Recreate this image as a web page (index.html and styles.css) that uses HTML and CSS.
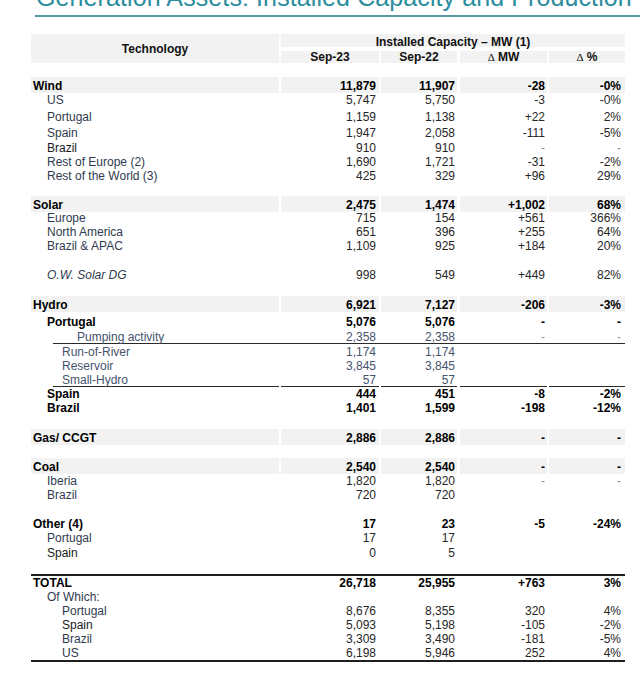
FILE: index.html
```html
<!DOCTYPE html>
<html lang="en">
<head>
<meta charset="utf-8">
<title>Generation Assets: Installed Capacity and Production</title>
<link rel="stylesheet" href="styles.css">
</head>
<body>
<h1 class="title">Generation Assets: Installed Capacity and Production</h1>
<div class="table">
  <div class="head">
    <div class="h-tech">Technology</div>
    <div class="h-cap">Installed Capacity – MW (1)</div>
    <div class="h-col">Sep-23</div>
    <div class="h-col">Sep-22</div>
    <div class="h-col"><span class="delta">Δ</span> MW</div>
    <div class="h-col"><span class="delta">Δ</span> %</div>
  </div>

  <div class="row band section"><div>Wind</div><div>11,879</div><div>11,907</div><div>-28</div><div>-0%</div></div>
  <div class="row"><div class="l1">US</div><div>5,747</div><div>5,750</div><div>-3</div><div>-0%</div></div>
  <div class="row gap-3"><div class="l1">Portugal</div><div>1,159</div><div>1,138</div><div>+22</div><div>2%</div></div>
  <div class="row gap-2"><div class="l1">Spain</div><div>1,947</div><div>2,058</div><div>-111</div><div>-5%</div></div>
  <div class="row gap-1"><div class="l1 dark">Brazil</div><div>910</div><div>910</div><div class="dim">-</div><div class="dim">-</div></div>
  <div class="row"><div class="l1">Rest of Europe (2)</div><div>1,690</div><div>1,721</div><div>-31</div><div>-2%</div></div>
  <div class="row"><div class="l1">Rest of the World (3)</div><div>425</div><div>329</div><div>+96</div><div>29%</div></div>

  <div class="row band section-sm"><div>Solar</div><div>2,475</div><div>1,474</div><div>+1,002</div><div>68%</div></div>
  <div class="row tuck"><div class="l1">Europe</div><div>715</div><div>154</div><div>+561</div><div>366%</div></div>
  <div class="row"><div class="l1">North America</div><div>651</div><div>396</div><div>+255</div><div>64%</div></div>
  <div class="row"><div class="l1">Brazil &amp; APAC</div><div>1,109</div><div>925</div><div>+184</div><div>20%</div></div>
  <div class="row section-lg"><div class="l1 italic">O.W. Solar DG</div><div>998</div><div>549</div><div>+449</div><div>82%</div></div>

  <div class="row band section"><div>Hydro</div><div>6,921</div><div>7,127</div><div>-206</div><div>-3%</div></div>
  <div class="row strong gap-3"><div class="l1">Portugal</div><div>5,076</div><div>5,076</div><div>-</div><div>-</div></div>
  <div class="row slate rule-soft gap-1"><div class="l3">Pumping activity</div><div>2,358</div><div>2,358</div><div class="dim">-</div><div class="dim">-</div></div>
  <div class="row slate gap-1"><div class="l2">Run-of-River</div><div>1,174</div><div>1,174</div><div></div><div></div></div>
  <div class="row slate"><div class="l2">Reservoir</div><div>3,845</div><div>3,845</div><div></div><div></div></div>
  <div class="row slate rule-seg"><div class="l2">Small-Hydro</div><div>57</div><div>57</div><div></div><div></div></div>
  <div class="row strong"><div class="l1">Spain</div><div>444</div><div>451</div><div>-8</div><div>-2%</div></div>
  <div class="row strong"><div class="l1">Brazil</div><div>1,401</div><div>1,599</div><div>-198</div><div>-12%</div></div>

  <div class="row band section"><div>Gas/ CCGT</div><div>2,886</div><div>2,886</div><div>-</div><div>-</div></div>

  <div class="row band section-sm"><div>Coal</div><div>2,540</div><div>2,540</div><div>-</div><div>-</div></div>
  <div class="row"><div class="l1">Iberia</div><div>1,820</div><div>1,820</div><div class="dim">-</div><div class="dim">-</div></div>
  <div class="row"><div class="l1">Brazil</div><div>720</div><div>720</div><div></div><div></div></div>

  <div class="row strong section-lg"><div class="l0">Other (4)</div><div>17</div><div>23</div><div>-5</div><div>-24%</div></div>
  <div class="row"><div class="l1">Portugal</div><div>17</div><div>17</div><div></div><div></div></div>
  <div class="row gap-1"><div class="l1 dark">Spain</div><div>0</div><div>5</div><div></div><div></div></div>

  <div class="row strong total section"><div class="l0">TOTAL</div><div>26,718</div><div>25,955</div><div>+763</div><div>3%</div></div>
  <div class="row"><div class="l1">Of Which:</div><div></div><div></div><div></div><div></div></div>
  <div class="row"><div class="l2">Portugal</div><div>8,676</div><div>8,355</div><div>320</div><div>4%</div></div>
  <div class="row"><div class="l2 dark">Spain</div><div>5,093</div><div>5,198</div><div>-105</div><div>-2%</div></div>
  <div class="row"><div class="l2">Brazil</div><div>3,309</div><div>3,490</div><div>-181</div><div>-5%</div></div>
  <div class="row last"><div class="l2">US</div><div>6,198</div><div>5,946</div><div>252</div><div>4%</div></div>
</div>
</body>
</html>
```
FILE: styles.css
```css
* { box-sizing: border-box; }

body {
  margin: 0;
  background: #ffffff;
  font-family: "Liberation Sans", Arial, sans-serif;
  color: #262626;
  overflow: hidden;
}

.title {
  margin: -15px 0 0 35px;
  padding: 0 0 5px 1px;
  height: 32px;
  font-size: 25px;
  line-height: 25px;
  font-weight: normal;
  color: #2b8d9e;
  border-bottom: 2px solid #5a98a4;
  white-space: nowrap;
  letter-spacing: 0.1px;
}

.table {
  margin: 17px 0 0 31px;
  width: 594px;
}

.head {
  display: grid;
  grid-template-columns: 248px 98px 76px 88px 76px;
  grid-template-rows: 13px 12px;
  column-gap: 2px;
  row-gap: 4px;
  font-size: 12px;
  font-weight: bold;
  color: #111;
}

.head > div { background: #f2f2f2; }

.h-tech {
  grid-row: 1 / 3;
  display: flex;
  align-items: center;
  justify-content: center;
}

.h-cap {
  grid-column: 2 / 6;
  text-align: center;
  line-height: 17px;
}

.h-col {
  text-align: center;
  line-height: 13px;
}

.h-col:nth-child(5) { margin-left: 1px; }

.delta {
  font-family: "Liberation Serif", serif;
  font-weight: normal;
  font-size: 11px;
}

.row {
  display: grid;
  grid-template-columns: 248px 98px 76px 88px 76px;
  column-gap: 2px;
  height: 14px;
  line-height: 14px;
  font-size: 12px;
  white-space: nowrap;
}

.row > div { text-align: right; }
.row > div:first-child { text-align: left; padding-left: 2px; color: #2f3a4f; }
.row > div:nth-child(2) { padding-right: 3px; }
.row > div:nth-child(3) { padding-right: 2px; }
.row > div:nth-child(4) { margin-left: 1px; padding-right: 2px; }
.row > div:nth-child(5) { padding-right: 4px; }

.row > div.l0 { padding-left: 2px; }
.row > div.l1 { padding-left: 16px; }
.row > div.l2 { padding-left: 31px; }
.row > div.l3 { padding-left: 46px; }
.row > div.dark { color: #1a1a1a; }
.row > div.italic { font-style: italic; }

.row > div.dim { color: #8c8c8c; }

.band {
  height: 16px;
  font-weight: bold;
}
.band > div {
  background: #f2f2f2;
  padding-top: 2px;
  color: #000;
}
.row.band > div:first-child { color: #000; }

.strong { font-weight: bold; }
.strong > div,
.row.strong > div:first-child { color: #000; }

.slate > div,
.row.slate > div:first-child { color: #46536d; }
.row.slate > div.dim { color: #9a9a9a; }

.section { margin-top: 14px; }
.section-sm { margin-top: 13px; }
.section-lg { margin-top: 15px; }
.gap-1 { margin-top: 1px; }
.gap-2 { margin-top: 2px; }
.gap-3 { margin-top: 3px; }
.tuck { margin-top: -1px; }

.rule-soft {
  background: linear-gradient(#2a2a2a, #2a2a2a) right bottom / calc(100% - 22px) 1px no-repeat;
}

.rule-seg > div {
  background: linear-gradient(#2a2a2a, #2a2a2a) right bottom / 100% 1px no-repeat;
}
.rule-seg > div:first-child {
  background-size: calc(100% - 22px) 1px;
}

.total {
  height: 16px;
  border-top: 2px solid #1e1e1e;
}

.last {
  height: 16px;
  border-bottom: 2px solid #1e1e1e;
}
```
